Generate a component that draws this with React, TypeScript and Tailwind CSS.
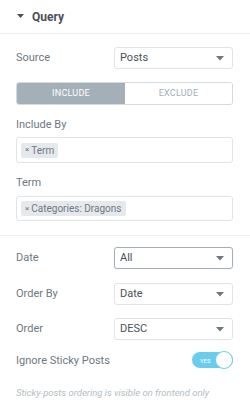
import React from 'react';

function Caret() {
  return (
    <svg width="8" height="5" viewBox="0 0 8 5" className="shrink-0">
      <path d="M0 0 H8 L4 4.5 Z" fill="#6d7882" />
    </svg>
  );
}

function SelectRow({ label, value, focused }: { label: string; value: string; focused?: boolean }) {
  return (
    <div className="flex items-center h-[22px]">
      <span className="text-[11px] text-[#6d7882] w-[98px]">{label}</span>
      <div
        className={`flex-1 h-[22px] flex items-center justify-between rounded-[3px] border pl-[5px] pr-[8px] ${
          focused ? 'border-[#a4afb7] shadow-[0_0_1px_rgba(0,0,0,0.2)]' : 'border-[#e0e4e8]'
        }`}
      >
        <span className="text-[11px] text-[#495157]">{value}</span>
        <Caret />
      </div>
    </div>
  );
}

function Tag({ text }: { text: string }) {
  return (
    <span className="inline-flex items-center h-[15px] px-[4px] bg-[#e6e9ec] text-[10px] text-[#6d7882] rounded-[2px]">
      <span className="text-[8px] mr-[2px]">×</span>
      {text}
    </span>
  );
}

export default function App() {
  return (
    <div className="w-[250px] h-[404px] bg-white overflow-hidden" style={{ fontFamily: 'Roboto, "Liberation Sans", sans-serif' }}>
      <div className="h-[34px] border-b border-[#eceef0] flex items-center pl-[17px]">
        <svg width="7" height="5" viewBox="0 0 7 5">
          <path d="M0 0 H7 L3.5 4 Z" fill="#495157" />
        </svg>
        <span className="ml-[8px] text-[12px] font-bold text-[#495157]">Query</span>
      </div>

      <div className="pl-4 pr-[17px] pt-[13px] pb-[14px] border-b border-[#eceef0]">
        <SelectRow label="Source" value="Posts" />

        <div className="mt-[13px] h-[23px] flex rounded-[3px] overflow-hidden border border-[#d5dadf]">
          <div className="w-[108px] bg-[#a4afb7] flex items-center justify-center text-[9px] text-white tracking-wide">
            INCLUDE
          </div>
          <div className="flex-1 bg-white flex items-center justify-center text-[9px] text-[#a4afb7] tracking-wide">
            EXCLUDE
          </div>
        </div>

        <div className="mt-[12px] h-[15px] text-[11px] leading-[15px] text-[#6d7882]">Include By</div>
        <div className="mt-[5px] h-[26px] border border-[#e0e4e8] rounded-[3px] flex items-center pl-[4px]">
          <Tag text="Term" />
        </div>

        <div className="mt-[12px] h-[15px] text-[11px] leading-[15px] text-[#6d7882]">Term</div>
        <div className="mt-[6px] h-[25px] border border-[#e0e4e8] rounded-[3px] flex items-center pl-[4px]">
          <Tag text="Categories: Dragons" />
        </div>
      </div>

      <div className="pl-4 pr-[17px] pt-[11px]">
        <SelectRow label="Date" value="All" focused />
        <div className="mt-[14px]">
          <SelectRow label="Order By" value="Date" />
        </div>
        <div className="mt-[13px]">
          <SelectRow label="Order" value="DESC" />
        </div>

        <div className="mt-[12px] h-[16px] flex items-center justify-between">
          <span className="text-[11px] text-[#6d7882] mt-[3px]">Ignore Sticky Posts</span>
          <div className="relative w-[41px] h-[16px] rounded-full bg-[#6bcdee] flex items-center">
            <span className="ml-[8px] text-[6px] text-white">YES</span>
            <span className="absolute right-0 top-[-1px] w-[18px] h-[18px] rounded-full bg-white border border-[#6bcdee]" />
          </div>
        </div>

        <div className="mt-[18px] text-[9.5px] leading-[14px] italic whitespace-nowrap text-[#b4bcc2]">
          Sticky-posts ordering is visible on frontend only
        </div>
      </div>
    </div>
  );
}
